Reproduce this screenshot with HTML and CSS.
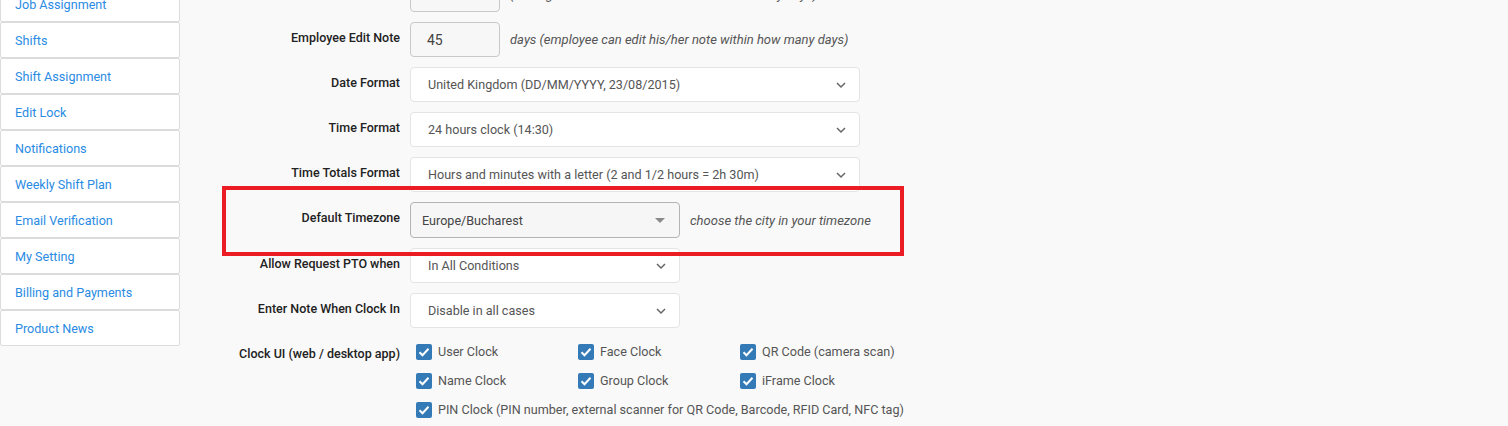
FILE: index.html
```html
<!DOCTYPE html>
<html>
<head>
<meta charset="utf-8">
<link rel="stylesheet" href="styles.css">
</head>
<body>
<div class="page">
  <nav class="sidebar">
    <a class="nav-item">Job Assignment</a>
    <a class="nav-item">Shifts</a>
    <a class="nav-item">Shift Assignment</a>
    <a class="nav-item">Edit Lock</a>
    <a class="nav-item">Notifications</a>
    <a class="nav-item">Weekly Shift Plan</a>
    <a class="nav-item">Email Verification</a>
    <a class="nav-item">My Setting</a>
    <a class="nav-item">Billing and Payments</a>
    <a class="nav-item">Product News</a>
  </nav>

  <main class="form">
    <div class="label">Manager Edit Time</div>
    <div class="control">
      <div class="input">20</div>
      <span class="hint">(manager can edit time records within how many days)</span>
    </div>

    <div class="label">Employee Edit Note</div>
    <div class="control">
      <div class="input">45</div>
      <span class="hint">days (employee can edit his/her note within how many days)</span>
    </div>

    <div class="label">Date Format</div>
    <div class="control">
      <div class="select wide"><span>United Kingdom (DD/MM/YYYY, 23/08/2015)</span><svg class="chev" viewBox="0 0 12 8"><path d="M2 2l4 4 4-4" /></svg></div>
    </div>

    <div class="label">Time Format</div>
    <div class="control">
      <div class="select wide"><span>24 hours clock (14:30)</span><svg class="chev" viewBox="0 0 12 8"><path d="M2 2l4 4 4-4" /></svg></div>
    </div>

    <div class="label">Time Totals Format</div>
    <div class="control">
      <div class="select wide"><span>Hours and minutes with a letter (2 and 1/2 hours = 2h 30m)</span><svg class="chev" viewBox="0 0 12 8"><path d="M2 2l4 4 4-4" /></svg></div>
    </div>

    <div class="label">Default Timezone</div>
    <div class="control">
      <div class="select tz"><span>Europe/Bucharest</span><svg class="caret" viewBox="0 0 10 5"><path d="M0 0h10L5 5z" /></svg></div>
      <span class="hint">choose the city in your timezone</span>
    </div>

    <div class="label">Allow Request PTO when</div>
    <div class="control">
      <div class="select narrow"><span>In All Conditions</span><svg class="chev" viewBox="0 0 12 8"><path d="M2 2l4 4 4-4" /></svg></div>
    </div>

    <div class="label">Enter Note When Clock In</div>
    <div class="control">
      <div class="select narrow"><span>Disable in all cases</span><svg class="chev" viewBox="0 0 12 8"><path d="M2 2l4 4 4-4" /></svg></div>
    </div>

    <div class="label">Clock UI (web / desktop app)</div>
    <div class="control checks">
      <label class="check"><span class="box"><svg viewBox="0 0 16 16"><path d="M3.5 8.2l3 3 6-6.4" /></svg></span>User Clock</label>
      <label class="check"><span class="box"><svg viewBox="0 0 16 16"><path d="M3.5 8.2l3 3 6-6.4" /></svg></span>Face Clock</label>
      <label class="check"><span class="box"><svg viewBox="0 0 16 16"><path d="M3.5 8.2l3 3 6-6.4" /></svg></span>QR Code (camera scan)</label>
      <label class="check"><span class="box"><svg viewBox="0 0 16 16"><path d="M3.5 8.2l3 3 6-6.4" /></svg></span>Name Clock</label>
      <label class="check"><span class="box"><svg viewBox="0 0 16 16"><path d="M3.5 8.2l3 3 6-6.4" /></svg></span>Group Clock</label>
      <label class="check"><span class="box"><svg viewBox="0 0 16 16"><path d="M3.5 8.2l3 3 6-6.4" /></svg></span>iFrame Clock</label>
      <label class="check full"><span class="box"><svg viewBox="0 0 16 16"><path d="M3.5 8.2l3 3 6-6.4" /></svg></span>PIN Clock (PIN number, external scanner for QR Code, Barcode, RFID Card, NFC tag)</label>
    </div>
  </main>

  <div class="highlight"></div>
</div>
</body>
</html>
```

FILE: styles.css
```css
html, body {
  margin: 0;
  padding: 0;
  background: #f9f9f9;
  font-family: Roboto, "Liberation Sans", Arial, sans-serif;
  font-size: 12.6px;
  color: #333;
  overflow: hidden;
}

.page {
  position: relative;
  display: flex;
  align-items: flex-start;
  width: 1508px;
  height: 426px;
}

.sidebar {
  width: 180px;
  flex: 0 0 180px;
  display: flex;
  flex-direction: column;
  margin-top: -14px;
}

.nav-item {
  display: block;
  box-sizing: border-box;
  height: 36px;
  line-height: 36px;
  padding: 0 14px;
  background: #fff;
  border: 1px solid #dcdcdc;
  border-radius: 2px;
  color: #2a8be3;
  text-decoration: none;
}

.form {
  margin-left: 30px;
  margin-top: -23px;
  display: grid;
  grid-template-columns: 190px 1fr;
  column-gap: 10px;
  row-gap: 10px;
  align-items: start;
}

.label {
  text-align: right;
  font-weight: 500;
  font-size: 12.5px;
  color: #222;
  padding-top: 7px;
  line-height: 18px;
  white-space: nowrap;
}

.control {
  display: flex;
  align-items: center;
  gap: 10px;
}

.input {
  box-sizing: border-box;
  width: 90px;
  height: 35px;
  padding: 0 16px;
  line-height: 35px;
  font-size: 14px;
  color: #444;
  background: #f7f7f7;
  border: 1px solid #c8c8c8;
  border-radius: 4px;
}

.hint {
  font-style: italic;
  font-size: 13px;
  color: #555;
}

.select {
  box-sizing: border-box;
  height: 35px;
  display: flex;
  align-items: center;
  justify-content: space-between;
  padding: 0 12px 0 17px;
  background: #fff;
  border: 1px solid #e4e4e4;
  border-radius: 4px;
  color: #555;
}

.select.wide { width: 450px; }
.select.narrow { width: 270px; }

.select.tz {
  width: 270px;
  height: 36px;
  padding: 0 14px 0 11px;
  background: #f6f6f6;
  border: 1px solid #b4b4b4;
  color: #444;
}

.chev {
  width: 12px;
  height: 8px;
  fill: none;
  stroke: #666;
  stroke-width: 1.5;
}

.caret {
  width: 10px;
  height: 5px;
  fill: #8a8a8a;
}

.checks {
  display: grid;
  grid-template-columns: 162px 162px 162px;
  column-gap: 0;
  row-gap: 13px;
  padding: 6px 0 0 6px;
  align-items: center;
}

.check {
  display: flex;
  align-items: center;
  gap: 6px;
  color: #555;
  line-height: 16px;
  white-space: nowrap;
}

.check.full {
  grid-column: 1 / -1;
}

.box {
  width: 16px;
  height: 16px;
  flex: 0 0 16px;
  background: #337ab7;
  border-radius: 2px;
  display: flex;
}

.box svg {
  width: 16px;
  height: 16px;
  fill: none;
  stroke: #fff;
  stroke-width: 2;
}

.highlight {
  position: absolute;
  left: 222px;
  top: 186px;
  width: 674px;
  height: 62px;
  border: 4px solid #ec1c24;
  pointer-events: none;
}
```
